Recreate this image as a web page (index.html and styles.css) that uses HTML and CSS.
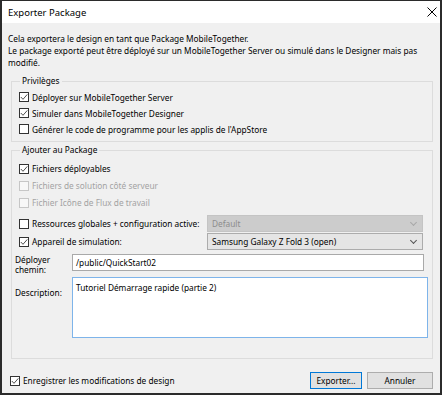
FILE: index.html
```html
<!DOCTYPE html>
<html lang="fr">
<head>
    <meta charset="UTF-8">
    <title>Exporter Package</title>
    <link rel="stylesheet" href="styles.css">
</head>
<body>

    <div class="window">
        <div class="titlebar">
            <span>Exporter Package</span>
            <svg class="close" viewBox="0 0 10 10"><path d="M0.5 0.5 L9.5 9.5 M9.5 0.5 L0.5 9.5" stroke="#000" stroke-width="1" fill="none"/></svg>
        </div>

        <div class="content">
            <p class="intro">Cela exportera le design en tant que Package MobileTogether.<br>Le package exporté peut être déployé sur un MobileTogether Server ou simulé dans le Designer mais pas<br>modifié.</p>

            <!-- Privileges -->
            <fieldset class="group group-priv">
                <legend>Privilèges</legend>
                <div class="check-row"><span class="box checked"></span>Déployer sur MobileTogether Server</div>
                <div class="check-row"><span class="box checked"></span>Simuler dans MobileTogether Designer</div>
                <div class="check-row"><span class="box"></span>Générer le code de programme pour les applis de l'AppStore</div>
            </fieldset>

            <!-- Package content -->
            <fieldset class="group group-add">
                <legend>Ajouter au Package</legend>
                <div class="check-row"><span class="box checked"></span>Fichiers déployables</div>
                <div class="check-row disabled"><span class="box"></span>Fichiers de solution côté serveur</div>
                <div class="check-row disabled"><span class="box"></span>Fichier Icône de Flux de travail</div>

                <div class="select-row first">
                    <div class="check-row"><span class="box"></span>Ressources globales + configuration active:</div>
                    <div class="select disabled"><span>Default</span><span class="chevron"></span></div>
                </div>
                <div class="select-row">
                    <div class="check-row"><span class="box checked"></span>Appareil de simulation:</div>
                    <div class="select"><span>Samsung Galaxy Z Fold 3 (open)</span><span class="chevron"></span></div>
                </div>

                <div class="field field-path">
                    <label>Déployer<br>chemin:</label>
                    <div class="input">/public/QuickStart02</div>
                </div>
                <div class="field field-desc">
                    <label>Description:</label>
                    <div class="textarea">Tutoriel Démarrage rapide (partie 2)</div>
                </div>
            </fieldset>

            <div class="footer">
                <div class="check-row"><span class="box checked"></span>Enregistrer les modifications de design</div>
                <div class="buttons">
                    <button class="btn btn-default">Exporter...</button>
                    <button class="btn">Annuler</button>
                </div>
            </div>
        </div>
    </div>

</body>
</html>
```

FILE: styles.css
```css
* {
    box-sizing: border-box;
}

body {
    margin: 0;
    font-family: "Noto Sans", "Liberation Sans", sans-serif;
    font-size: 8.3px;
    color: #000;
    background: #fff;
}

.window {
    width: 442px;
    height: 395px;
    border: 2px solid #2b2b2b;
    border-top-width: 1px;
    background: #f0f0f0;
    display: flex;
    flex-direction: column;
}

.titlebar {
    height: 22px;
    background: #fff;
    display: flex;
    align-items: center;
    justify-content: space-between;
    padding: 0 3px 0 6px;
    font-size: 9.5px;
}

.close {
    width: 10px;
    height: 10px;
}

.content {
    flex: 1;
    display: flex;
    flex-direction: column;
    padding: 10px 6px 0 6px;
}

.intro {
    margin: 0;
    line-height: 12px;
    white-space: nowrap;
}

/* group boxes */
.group {
    margin: 6px 1px 0 3px;
    padding: 0 0 0 7px;
    border: 1px solid #dcdcdc;
}

.group legend {
    padding: 0 2px;
    margin-left: 1px;
    line-height: 12px;
}

.group-priv {
    padding-top: 2px;
    padding-bottom: 4px;
}

.group-priv .check-row {
    height: 16px;
}

.group-add {
    margin-top: 2px;
    padding-top: 4px;
    padding-right: 0;
    padding-bottom: 20px;
}

.check-row {
    display: flex;
    align-items: center;
    height: 17px;
    gap: 3px;
    white-space: nowrap;
}

.check-row.disabled {
    color: #a3a3a3;
}

.box {
    width: 10px;
    height: 10px;
    border: 1px solid #333;
    background: #fff;
    flex: none;
}

.box.checked {
    background: #fff url("data:image/svg+xml;utf8,<svg xmlns='http://www.w3.org/2000/svg' viewBox='0 0 8 8'><path d='M0.8 4 L3 6.3 L7.3 1.4' stroke='%23222' stroke-width='0.8' fill='none'/></svg>") center / 8px 8px no-repeat;
}

.disabled .box {
    border-color: #c6c6c6;
    background: #f7f7f7;
}

/* rows with a dropdown */
.select-row {
    display: flex;
    justify-content: space-between;
    align-items: center;
    padding-right: 9px;
}

.select-row.first {
    margin-top: 4px;
    margin-bottom: 1px;
}

.select {
    width: 216px;
    height: 17px;
    display: flex;
    align-items: center;
    justify-content: space-between;
    padding: 0 6px 0 4px;
    background: #e5e5e5;
    border: 1px solid #acacac;
}

.select.disabled {
    background: #cccccc;
    border-color: #c4c4c4;
    color: #8c8c8c;
}

.chevron {
    width: 5px;
    height: 5px;
    border-right: 1px solid #555;
    border-bottom: 1px solid #555;
    transform: translateY(-1px) rotate(45deg);
}

.select.disabled .chevron {
    border-color: #a8a8a8;
}

/* text fields */
.field {
    display: flex;
    margin-left: -4px;
}

.field label {
    width: 57px;
    flex: none;
    line-height: 9.5px;
}

.field-path {
    height: 17px;
    margin-top: 4px;
    padding-right: 8px;
}

.field-path label {
    margin-top: 1px;
}

.field-desc {
    margin-top: 6px;
    padding-right: 4px;
}

.field-desc label {
    padding-top: 11px;
}

.input {
    flex: 1;
    height: 17px;
    padding: 2px 3px 0;
    background: #fff;
    border: 1px solid #a9a9a9;
}

.textarea {
    flex: 1;
    height: 61px;
    padding: 4px 3px 0;
    background: #fff;
    border: 1px solid #7eb4ea;
}

/* bottom bar */
.footer {
    display: flex;
    justify-content: space-between;
    align-items: center;
    margin: 13px 1px 0 2px;
}

.buttons {
    display: flex;
    gap: 5px;
}

.btn {
    font-family: inherit;
    font-size: 8.3px;
    height: 17px;
    padding: 0;
    background: #e1e1e1;
    border: 1px solid #adadad;
    width: 66px;
}

.btn-default {
    width: 52px;
    border-color: #0078d7;
}
```
